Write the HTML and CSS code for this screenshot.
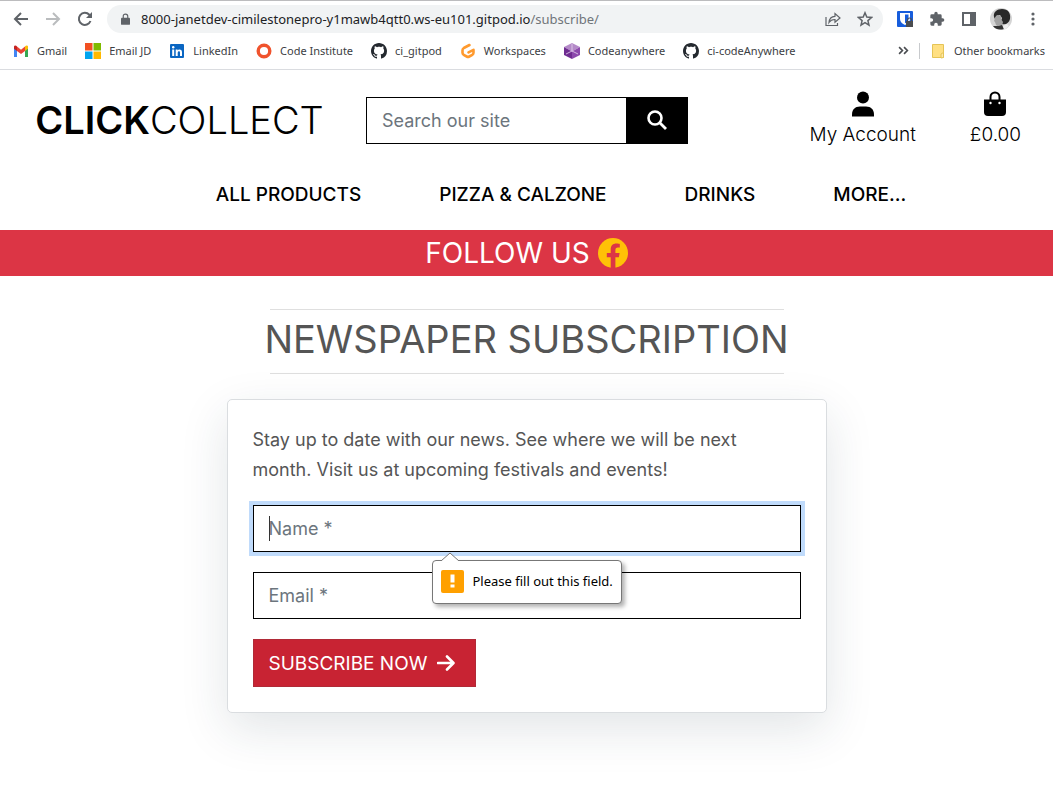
FILE: index.html
```
<!DOCTYPE html>
<html lang="en">
<head>
<meta charset="utf-8">
<title>Click Collect - Newspaper Subscription</title>
<link rel="stylesheet" href="styles.css">
</head>
<body>
<svg class="defs" aria-hidden="true">
  <symbol id="github" viewBox="0 0 16 16"><path fill="#24292f" d="M8 0C3.58 0 0 3.58 0 8c0 3.54 2.29 6.53 5.47 7.59.4.07.55-.17.55-.38 0-.19-.01-.82-.01-1.49-2.01.37-2.53-.49-2.69-.94-.09-.23-.48-.94-.82-1.13-.28-.15-.68-.52-.01-.53.63-.01 1.08.58 1.23.82.72 1.21 1.87.87 2.33.66.07-.52.28-.87.51-1.07-1.78-.2-3.64-.89-3.64-3.95 0-.87.31-1.59.82-2.15-.08-.2-.36-1.02.08-2.12 0 0 .67-.21 2.2.82.64-.18 1.32-.27 2-.27s1.36.09 2 .27c1.53-1.04 2.2-.82 2.2-.82.44 1.1.16 1.92.08 2.12.51.56.82 1.27.82 2.15 0 3.07-1.87 3.75-3.65 3.95.29.25.54.73.54 1.48 0 1.07-.01 1.93-.01 2.2 0 .21.15.46.55.38A8.01 8.01 0 0 0 16 8c0-4.42-3.58-8-8-8z"/></symbol>
</svg>

<div class="browser">
  <div class="toolbar">
    <div class="nav-buttons">
      <button aria-label="Back"><svg viewBox="0 0 16 16"><path d="M15 8H2M8 2L2 8l6 6" fill="none" stroke="#5f6368" stroke-width="2"/></svg></button>
      <button aria-label="Forward"><svg viewBox="0 0 16 16"><path d="M1 8h13M8 2l6 6-6 6" fill="none" stroke="#babcbe" stroke-width="2"/></svg></button>
      <button aria-label="Reload"><svg viewBox="0 0 16 16"><path d="M13.500 10A6 6 0 1 1 12.300 3.800L14 5.500" fill="none" stroke="#5f6368" stroke-width="2"/><path d="M15 1v6H9z" fill="#5f6368"/></svg></button>
    </div>
    <div class="address">
      <svg class="lock" viewBox="0 0 10 13"><path d="M1 5h8a1 1 0 0 1 1 1v6a1 1 0 0 1-1 1H1a1 1 0 0 1-1-1V6a1 1 0 0 1 1-1z" fill="#5f6368"/><path d="M2.500 6V3.500a2.500 2.500 0 0 1 5 0V6" fill="none" stroke="#5f6368" stroke-width="1.300"/></svg>
      <span class="url">8000-janetdev-cimilestonepro-y1mawb4qtt0.ws-eu101.gitpod.io<span class="path">/subscribe/</span></span>
      <button aria-label="Share"><svg viewBox="0 0 16 16"><path d="M1 6v8.500h11.500V12M4 11.500c.3-4 2.500-6 6-6.200V2.500L15 7l-5 4.300V8.500C7.500 8.400 5.500 9.300 4 11.500z" fill="none" stroke="#5f6368" stroke-width="1.200"/></svg></button>
      <button aria-label="Bookmark this page"><svg viewBox="0 0 16 16"><path d="M8 1.800l1.800 4.300 4.700.4-3.600 3.100 1.100 4.600L8 11.700l-4 2.500 1.100-4.600L1.500 6.500l4.700-.4z" fill="none" stroke="#5f6368" stroke-width="1.500"/></svg></button>
    </div>
    <div class="extensions">
      <button aria-label="Password manager"><svg viewBox="0 0 16 16"><rect width="16" height="16" rx="1" fill="#175ddc"/><path d="M3 2h10v6c0 3-2.500 5-5 6-2.500-1-5-3-5-6z" fill="#fff"/><path d="M8 3.500h3.500V8c0 2-1.500 3.300-3.500 4.300z" fill="#175ddc"/><path d="M9 10h7v6H9z" fill="#4b4d50"/><path d="M10.500 10V9a2 2 0 0 1 4 0v1" fill="none" stroke="#4b4d50" stroke-width="1.200"/></svg></button>
      <button aria-label="Extensions"><svg viewBox="0 0 24 24"><path fill="#5f6368" d="M20.500 11H19V7a2 2 0 0 0-2-2h-4V3.500a2.500 2.500 0 0 0-5 0V5H4a2 2 0 0 0-2 2v3.800h1.500a2.700 2.700 0 0 1 0 5.400H2V20a2 2 0 0 0 2 2h3.800v-1.500a2.700 2.700 0 0 1 5.400 0V22H17a2 2 0 0 0 2-2v-4h1.500a2.500 2.500 0 0 0 0-5z"/></svg></button>
      <button aria-label="Side panel"><svg viewBox="0 0 16 16"><path fill="#5f6368" fill-rule="evenodd" d="M1 1h14v14H1zM3 3v10h6V3z"/></svg></button>
      <button class="profile" aria-label="Profile"><svg viewBox="0 0 22 22"><circle cx="11" cy="11" r="11" fill="#d4d4d4"/><path d="M4 9C3 4 7 1 12 1c6 0 9 4 8 10-1 4-4 6-8 5l-1-3 1-3-2-3-4 1-1 3z" fill="#292929"/><path d="M5 10l2-3 4 1v3l2 3-1 4-3 1-3-2-1-3-1-1z" fill="#a2a2a2"/><path d="M3 18l6 0 3-1 2 4c-4 1-8 1-11-3z" fill="#333"/><path d="M13 18l4-2 2 2c-2 2-3 3-5 3.500z" fill="#eee"/></svg></button>
      <button aria-label="Menu"><svg viewBox="0 0 16 16"><g fill="#5f6368"><circle cx="8" cy="3" r="1.600"/><circle cx="8" cy="8" r="1.600"/><circle cx="8" cy="13" r="1.600"/></g></svg></button>
    </div>
  </div>
  <div class="bookmarks">
    <a href="#"><svg viewBox="0 0 16 16"><path d="M1 3v11h3V7z" fill="#4285f4"/><path d="M15 3v11h-3V7z" fill="#34a853"/><path d="M4 3.500l4 3.200 4-3.200V8l-4 3-4-3z" fill="#ea4335"/><path d="M1 4c0-2 2-2 3-.5V8L1 5.800z" fill="#c5221f"/><path d="M15 4c0-2-2-2-3-.5V8l3-2.200z" fill="#fbbc04"/></svg>Gmail</a>
    <a href="#"><svg viewBox="0 0 16 16"><path d="M0 0h7.500v7.500H0z" fill="#f25022"/><path d="M8.500 0H16v7.500H8.500z" fill="#7fba00"/><path d="M0 8.500h7.500V16H0z" fill="#00a4ef"/><path d="M8.500 8.500H16V16H8.500z" fill="#ffb900"/></svg>Email JD</a>
    <a href="#"><svg viewBox="0 0 16 16"><rect x="1" y="1" width="14" height="14" rx="1" fill="#0a66c2"/><circle cx="4.200" cy="4.300" r="1.200" fill="#fff"/><path d="M3.200 6.500h2V13h-2zM6.700 6.500h1.900v.9c.9-1.500 4.400-1.600 4.400 1.700V13h-2V9.700c0-2.200-2.300-1.900-2.300 0V13h-2z" fill="#fff"/></svg>LinkedIn</a>
    <a href="#"><svg viewBox="0 0 16 16"><circle cx="8" cy="8" r="5.800" fill="none" stroke="#f0532d" stroke-width="3.400"/></svg>Code Institute</a>
    <a href="#"><svg><use href="#github"/></svg>ci_gitpod</a>
    <a href="#"><svg viewBox="0 0 16 16"><path d="M9.500 2L3.800 5Q2.500 5.800 2.500 7.200v2.600q0 1.300 1.200 2l3 1.700q1.300.7 2.600 0l3-1.700q1.200-.7 1.200-2V6.800L8.500 9.300" fill="none" stroke="#ff9a2e" stroke-width="2.600" stroke-linecap="round" stroke-linejoin="round"/></svg>Workspaces</a>
    <a href="#"><svg viewBox="0 0 16 16"><path d="M8 0l8 4-8 4.500L0 4z" fill="#b48ac8"/><path d="M0 4l8 4.500V16l-8-4z" fill="#6f2c91"/><path d="M16 4L8 8.500V16l8-4z" fill="#8c49ac"/><path d="M8 1v7l6 3M8 8l-6 3" stroke="#e6d2ee" stroke-width=".8" fill="none"/></svg>Codeanywhere</a>
    <a href="#"><svg><use href="#github"/></svg>ci-codeAnywhere</a>
    <button class="more" aria-label="More bookmarks"><svg viewBox="0 0 10 10"><path d="M1 2l3 3-3 3M5.500 2l3 3-3 3" fill="none" stroke="#4a4d51" stroke-width="1.500"/></svg></button>
    <a href="#" class="other"><svg viewBox="0 0 16 16"><path d="M2.500 1.500h11v13h-11z" fill="#ffe083" stroke="#e5c456"/><path d="M11 15v-4l2.500-1.500v5z" fill="#ffe9a5" stroke="#e5c456"/></svg>Other bookmarks</a>
  </div>
</div>

<header class="site-header">
  <div class="masthead">
    <a href="#" class="logo"><strong>CLICK</strong>COLLECT</a>
    <form class="search">
      <input type="text" placeholder="Search our site" aria-label="Search our site">
      <button aria-label="Search"><svg viewBox="0 0 20 20"><circle cx="8" cy="8" r="6.500" fill="none" stroke="#fff" stroke-width="2.600"/><path d="M12.500 12.500L19 19" stroke="#fff" stroke-width="2.800"/></svg></button>
    </form>
    <div class="account">
      <a href="#"><svg viewBox="0 0 24 26"><circle cx="12" cy="6.500" r="6" fill="#000"/><path d="M1 25.500v-2c0-5 3-8 8-8h6c5 0 8 3 8 8v2z" fill="#000"/></svg>My Account</a>
      <a href="#"><svg viewBox="0 0 24 26"><path d="M1 8.500h22V21a4 4 0 0 1-4 4H5a4 4 0 0 1-4-4z"/><path d="M7.500 10V6a4.500 4.500 0 0 1 9 0v4" fill="none" stroke="#000" stroke-width="2"/><circle cx="7.500" cy="12" r="1.200" fill="#fff"/><circle cx="16.500" cy="12" r="1.200" fill="#fff"/></svg>£0.00</a>
    </div>
  </div>
  <nav class="main-nav">
    <a href="#">ALL PRODUCTS</a>
    <a href="#">PIZZA &amp; CALZONE</a>
    <a href="#">DRINKS</a>
    <a href="#">MORE...</a>
  </nav>
</header>

<div class="follow">
  <span>FOLLOW US</span>
  <a href="#" aria-label="Facebook"><svg viewBox="0 0 30 30"><circle cx="15" cy="15" r="15" fill="#ffc107"/><path d="M12.700 30V19.300H8.800v-4.400h3.900v-3.400c0-3.800 2.200-5.900 5.700-5.900 1.600 0 3.400.3 3.400.3v3.700h-1.900c-1.900 0-2.500 1.200-2.500 2.400v2.900h4.200l-.7 4.400h-3.500V30z" fill="#dc3545"/></svg></a>
</div>

<main class="content">
  <h1>NEWSPAPER SUBSCRIPTION</h1>
  <form class="card">
    <p>Stay up to date with our news. See where we will be next month. Visit us at upcoming festivals and events!</p>
    <div class="field">
      <input class="focused" type="text" placeholder="Name *" aria-label="Name">
      <span class="caret"></span>
      <div class="hint" role="alert">
        <svg class="pointer" viewBox="0 0 18 9"><path d="M0 9l9-8 9 8" fill="#fff" stroke="#777"/></svg>
        <svg class="warning" viewBox="0 0 23 23"><rect width="23" height="23" rx="2" fill="#ffa000"/><path d="M9.500 4.500h4v8h-4zM9.500 14.500h4v3h-4z" fill="#fff"/></svg>
        <span>Please fill out this field.</span>
      </div>
    </div>
    <div class="field">
      <input type="email" placeholder="Email *" aria-label="Email">
    </div>
    <button class="submit" type="button">SUBSCRIBE NOW <svg viewBox="0 0 18 18"><path d="M1 9h15M10 2.500L16.500 9 10 15.500" fill="none" stroke="#fff" stroke-width="2.600" stroke-linecap="round" stroke-linejoin="round"/></svg></button>
  </form>
</main>
</body>
</html>
```
FILE: styles.css
```
* { box-sizing: border-box; }
body {
  margin: 0;
  background: #fff;
  color: #000;
  font-family: Inter, "Liberation Sans", sans-serif;
  font-size: 18px;
}
a { color: inherit; text-decoration: none; }
button { margin: 0; padding: 0; border: 0; background: none; font: inherit; }
svg { display: block; flex: none; }
.defs { position: absolute; width: 0; height: 0; }

/* Browser bar */
.browser {
  height: 70px;
  border-top: 1px solid #bcbcbe;
  border-bottom: 1px solid #dadce0;
  font-family: "Noto Sans", "Open Sans", sans-serif;
  color: #3c4043;
}
.toolbar { display: flex; align-items: center; height: 36px; padding: 0 12px; }
.toolbar svg { width: 16px; height: 16px; }
.nav-buttons { display: flex; gap: 16px; padding: 0 14px 0 1px; }
.address {
  display: flex;
  align-items: center;
  flex: 1;
  gap: 16px;
  height: 28px;
  padding: 0 10px 0 14px;
  border-radius: 14px;
  background: #f1f3f4;
}
.address .lock { width: 9px; height: 12px; }
.url { flex: 1; margin-left: -5px; font-size: 13px; color: #202124; white-space: nowrap; }
.path { color: #70757a; }
.extensions { display: flex; align-items: center; gap: 16px; padding-left: 14px; }
.extensions .profile { margin: 0 -3px; }
.extensions .profile svg { width: 22px; height: 22px; }
.bookmarks {
  display: flex;
  align-items: center;
  gap: 18px;
  height: 27px;
  padding: 0 8px 0 13px;
  font-size: 11px;
  line-height: 16px;
  white-space: nowrap;
}
.bookmarks a { display: flex; align-items: center; gap: 8px; }
.bookmarks a svg { width: 16px; height: 16px; }
.bookmarks .more { margin-left: auto; margin-right: -8px; }
.bookmarks .more svg { width: 11px; height: 11px; }
.bookmarks .other { padding-left: 10px; border-left: 1px solid #c8cacd; }

/* Site header */
.site-header { height: 160px; padding-top: 21px; }
.masthead { display: grid; grid-template-columns: repeat(3, minmax(0, 1fr)); }
.logo { justify-self: center; align-self: center; padding-left: 8px; font-size: 38px; line-height: 58px; font-weight: 300; }
.logo strong { font-weight: 600; }
.search { display: flex; align-self: center; height: 47px; margin: 0 14px 0 15px; border: 1px solid #000; }
.search input { flex: 1; min-width: 0; padding: 0 15px; border: 0; font: inherit; }
.search button { display: grid; place-items: center; width: 61px; background: #000; }
.search svg { width: 20px; height: 20px; }
input::placeholder { color: #6c757d; opacity: 1; }
.account { display: flex; justify-content: flex-end; gap: 54px; padding-right: 32px; font-size: 19px; font-weight: 300; line-height: 26px; }
.account a { display: flex; flex-direction: column; align-items: center; gap: 5px; }
.account svg { width: 24px; height: 26px; }
.main-nav {
  display: flex;
  justify-content: center;
  gap: 78px;
  padding: 32px 0 0 69px;
  font-size: 19px;
  font-weight: 500;
  line-height: 28px;
}

.follow {
  display: flex;
  align-items: center;
  justify-content: center;
  gap: 8px;
  height: 46px;
  padding-bottom: 1px;
  background: #dc3545;
  color: #fff;
  font-size: 28px;
}
.follow svg { width: 30px; height: 30px; }

/* Subscription form */
.content { display: flex; flex-direction: column; align-items: center; padding: 33px 16px 96px; color: #555; }
h1 {
  width: 514px;
  max-width: 100%;
  margin: 0 0 25px;
  border: solid #dfdfdf;
  border-width: 1px 0;
  display: flex;
  justify-content: center;
  font-size: 38px;
  line-height: 58px;
  padding-bottom: 5px;
  font-weight: 400;
  white-space: nowrap;
}
.card {
  width: 600px;
  max-width: 100%;
  padding: 25px;
  border: 1px solid #dadde0;
  border-radius: 5px;
  background: #fff;
  box-shadow: 0 16px 48px rgba(33, 52, 70, .13);
}
.card p { margin: 0 0 20px; line-height: 30px; }
.field { position: relative; margin-bottom: 20px; }
.field input {
  display: block;
  width: 100%;
  height: 47px;
  padding: 0 15px;
  border: 1px solid #000;
  border-radius: 0;
  background: #fff;
  font: inherit;
}
.field .focused { box-shadow: 0 0 0 4px #c0dbfb; }
.caret { position: absolute; left: 16px; top: 11px; width: 1px; height: 25px; background: #333; }
.hint {
  position: absolute;
  z-index: 1;
  left: 179px;
  top: 55px;
  display: flex;
  align-items: center;
  gap: 9px;
  height: 44px;
  padding: 0 8px 2px;
  border: 1px solid #777;
  border-radius: 4px;
  background: #fff;
  box-shadow: 3px 3px 4px rgba(0, 0, 0, .3);
  color: #000;
  font-family: "Noto Sans", "Open Sans", sans-serif;
  font-size: 13px;
  white-space: nowrap;
}
.pointer { position: absolute; left: 8px; top: -9px; width: 18px; height: 9px; }
.warning { width: 23px; height: 23px; }
.submit {
  display: flex;
  align-items: center;
  gap: 10px;
  height: 48px;
  padding: 0 20px 0 15px;
  border: 1px solid #b02a37;
  background: #c82333;
  color: #fff;
  font-size: 19px;
}
.submit svg { width: 18px; height: 18px; }
```
